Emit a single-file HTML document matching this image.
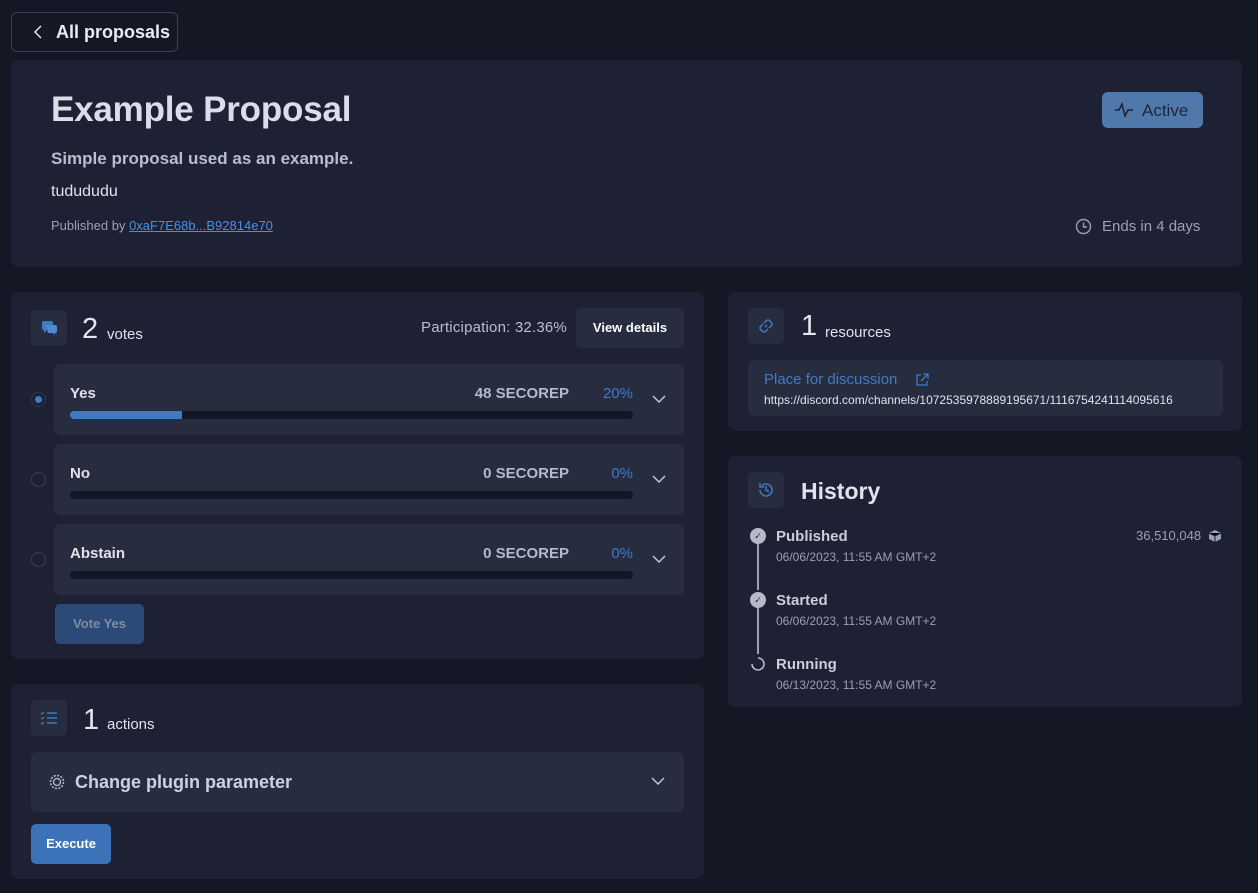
<!DOCTYPE html>
<html><head><meta charset="utf-8"><style>
*{box-sizing:border-box;margin:0;padding:0}
body{width:1258px;height:893px;background:#141824;font-family:"Liberation Sans",sans-serif;color:#e2e6ef;position:relative;overflow:hidden}
.a{position:absolute}
.card{position:absolute;background:#1d2133;border-radius:8px}
.ib{position:absolute;width:36px;height:36px;background:#272c3e;border-radius:5px;display:flex;align-items:center;justify-content:center}
.row{position:absolute;left:54px;width:630px;height:71px;background:#272c3e;border-radius:6px}
.row .l{position:absolute;left:16px;top:21px;font-size:15px;font-weight:bold;color:#dfe3ec}
.row .s{position:absolute;right:115px;top:21px;font-size:15px;font-weight:bold;color:#b4bac8}
.row .p{position:absolute;right:51px;top:21px;font-size:15px;color:#3f7ac4}
.row .bar{position:absolute;left:16px;top:47px;width:563px;height:8px;border-radius:4px;background:#121625;overflow:hidden}
.row .ch{position:absolute;right:18px;top:31px}
.rad{position:absolute;left:31px;width:15px;height:15px;border-radius:50%;border:1px solid #3a4050;background:#1d2133}
.sub{font-size:12px;color:#9aa1b1}
</style></head><body>
<div class="a" style="left:11px;top:12px;width:167px;height:40px;border:1px solid #3a3f55;border-radius:6px"></div>
<svg class="a" style="left:32px;top:24px" width="12" height="16"><path d="M9 2 L3 8 L9 14" stroke="#dfe3ec" stroke-width="1.5" fill="none"/></svg>
<div class="a" style="left:56px;top:22px;font-size:18px;font-weight:bold;color:#e8ebf2">All proposals</div>

<div class="card" style="left:11px;top:60px;width:1231px;height:207px"></div>
<div class="a" style="left:51px;top:90px;font-size:35px;font-weight:bold;color:#d9dfea;letter-spacing:-0.2px">Example Proposal</div>
<div class="a" style="left:51px;top:149px;font-size:17px;font-weight:bold;color:#b8bfcc">Simple proposal used as an example.</div>
<div class="a" style="left:51px;top:183px;font-size:16px;color:#dfe3ec">tudududu</div>
<div class="a" style="left:51px;top:218px;font-size:13px;color:#9aa1b1">Published by <span style="color:#4a8ee6;text-decoration:underline">0xaF7E68b...B92814e70</span></div>
<div class="a" style="left:1102px;top:92px;width:101px;height:36px;background:#4f79ab;border-radius:6px"></div>
<svg class="a" style="left:1114px;top:101px" width="20" height="18"><path d="M1 9 H5 L8 3 L11 15 L14 9 H19" stroke="#1d2133" stroke-width="1.5" fill="none"/></svg>
<div class="a" style="left:1142px;top:101px;font-size:17px;color:#1e2538">Active</div>
<svg class="a" style="left:1075px;top:218px" width="17" height="17"><circle cx="8.5" cy="8.5" r="7" stroke="#9aa1b1" stroke-width="1.4" fill="none"/><path d="M8.5 4.5V9H12" stroke="#9aa1b1" stroke-width="1.4" fill="none"/></svg>
<div class="a" style="left:1102px;top:218px;font-size:15px;color:#9aa1b1">Ends in 4 days</div>

<div class="card" style="left:11px;top:292px;width:693px;height:367px"></div>
<div class="ib" style="left:31px;top:310px"><svg width="18" height="16"><path d="M2 3 Q2 1 4 1 H11 Q13 1 13 3 V8 Q13 10 11 10 H7 L4 13 V10 Q2 10 2 8Z" fill="#3f7ac4"/><path d="M6 5 H15 Q17 5 17 7 V11 Q17 13 15 13 V15 L13 13 H8" fill="#4f8ad4"/></svg></div>
<div class="a" style="left:82px;top:313px;font-size:29px;color:#e2e6ef">2</div>
<div class="a" style="left:107px;top:326px;font-size:15px;color:#dfe3ec">votes</div>
<div class="a" style="left:421px;top:319px;font-size:15px;color:#b8bfcc;letter-spacing:0.2px">Participation: 32.36%</div>
<div class="a" style="left:576px;top:308px;width:108px;height:40px;background:#272c3e;border-radius:5px;font-size:13px;font-weight:bold;color:#fff;text-align:center;line-height:40px">View details</div>

<div class="rad" style="top:392px;border-color:#2a3556"><div style="position:absolute;left:3px;top:3px;width:7px;height:7px;border-radius:50%;background:#3f7ac4"></div></div>
<div class="row" style="top:364px"><div class="l">Yes</div><div class="s">48 SECOREP</div><div class="p">20%</div><div class="bar"><div style="width:112px;height:8px;background:#3f7ac4"></div></div><svg class="ch" width="14" height="9"><path d="M1 1 L7 7 L13 1" stroke="#c8cdd8" stroke-width="1.4" fill="none"/></svg></div>
<div class="rad" style="top:472px"></div>
<div class="row" style="top:444px"><div class="l">No</div><div class="s">0 SECOREP</div><div class="p">0%</div><div class="bar"></div><svg class="ch" width="14" height="9"><path d="M1 1 L7 7 L13 1" stroke="#c8cdd8" stroke-width="1.4" fill="none"/></svg></div>
<div class="rad" style="top:552px"></div>
<div class="row" style="top:524px"><div class="l">Abstain</div><div class="s">0 SECOREP</div><div class="p">0%</div><div class="bar"></div><svg class="ch" width="14" height="9"><path d="M1 1 L7 7 L13 1" stroke="#c8cdd8" stroke-width="1.4" fill="none"/></svg></div>
<div class="a" style="left:55px;top:604px;width:89px;height:40px;background:#2c4a78;border-radius:5px;font-size:13px;font-weight:bold;color:#7f8da3;text-align:center;line-height:40px">Vote Yes</div>

<div class="card" style="left:11px;top:684px;width:693px;height:195px"></div>
<div class="ib" style="left:31px;top:700px"><svg width="18" height="14"><path d="M7 2H17M7 7H17M7 12H17" stroke="#3f7ac4" stroke-width="1.6"/><path d="M1 2L2 3L4 1M1 7L2 8L4 6M1 12L2 13L4 11" stroke="#3f7ac4" stroke-width="1.2" fill="none"/></svg></div>
<div class="a" style="left:83px;top:704px;font-size:29px;color:#e2e6ef">1</div>
<div class="a" style="left:107px;top:716px;font-size:15px;color:#dfe3ec">actions</div>
<div class="a" style="left:31px;top:752px;width:653px;height:60px;background:#272c3e;border-radius:6px"></div>
<svg class="a" style="left:49px;top:774px" width="16" height="16"><circle cx="8" cy="8" r="6.5" stroke="#b8bfcc" stroke-width="1.5" stroke-dasharray="2 1.4" fill="none"/><circle cx="8" cy="8" r="3.5" stroke="#b8bfcc" stroke-width="1.3" fill="none"/></svg>
<div class="a" style="left:75px;top:772px;font-size:18px;font-weight:bold;color:#c9d3e3">Change plugin parameter</div>
<svg class="a" style="left:651px;top:777px" width="14" height="9"><path d="M1 1 L7 7 L13 1" stroke="#c8cdd8" stroke-width="1.4" fill="none"/></svg>
<div class="a" style="left:31px;top:824px;width:80px;height:40px;background:#3c73b8;border-radius:5px;font-size:13px;font-weight:bold;color:#fff;text-align:center;line-height:40px">Execute</div>

<div class="card" style="left:728px;top:292px;width:514px;height:139px"></div>
<div class="ib" style="left:748px;top:308px"><svg width="18" height="18"><path d="M8 10 L10 8 M7 6 L9 4 Q11 2 13 4 L14 5 Q16 7 14 9 L12 11 M11 12 L9 14 Q7 16 5 14 L4 13 Q2 11 4 9 L6 7" stroke="#3f7ac4" stroke-width="1.5" fill="none"/></svg></div>
<div class="a" style="left:801px;top:310px;font-size:29px;color:#e2e6ef">1</div>
<div class="a" style="left:825px;top:324px;font-size:15px;color:#dfe3ec">resources</div>
<div class="a" style="left:748px;top:360px;width:475px;height:56px;background:#272c3e;border-radius:6px"></div>
<div class="a" style="left:764px;top:371px;font-size:15px;color:#3f7ac4">Place for discussion</div>
<svg class="a" style="left:915px;top:373px" width="14" height="14"><path d="M6 2H2V12H12V8M8 1H13V6M13 1L6 8" stroke="#3f7ac4" stroke-width="1.3" fill="none"/></svg>
<div class="a" style="left:764px;top:393px;font-size:12px;color:#dfe3ec">https://discord.com/channels/1072535978889195671/1116754241114095616</div>

<div class="card" style="left:728px;top:456px;width:514px;height:251px"></div>
<div class="ib" style="left:748px;top:472px"><svg width="18" height="18"><path d="M3 9 A6 6 0 1 0 5 4.5" stroke="#3f7ac4" stroke-width="1.5" fill="none"/><path d="M3 2V6H7" stroke="#3f7ac4" stroke-width="1.5" fill="none"/><path d="M9 5V9L12 11" stroke="#3f7ac4" stroke-width="1.5" fill="none"/></svg></div>
<div class="a" style="left:801px;top:478px;font-size:23px;font-weight:bold;color:#dfe3ec">History</div>
<div class="a" style="left:757px;top:544px;width:2px;height:46px;background:#9aa1b1"></div>
<div class="a" style="left:757px;top:608px;width:2px;height:46px;background:#9aa1b1"></div>
<div class="a" style="left:750px;top:528px;width:16px;height:16px;border-radius:50%;background:#b4bac8;text-align:center;font-size:9px;line-height:16px;color:#1d2133">✓</div>
<div class="a" style="left:750px;top:592px;width:16px;height:16px;border-radius:50%;background:#b4bac8;text-align:center;font-size:9px;line-height:16px;color:#1d2133">✓</div>
<svg class="a" style="left:750px;top:656px" width="16" height="16"><path d="M8 2 A6 6 0 1 1 2 8" stroke="#b4bac8" stroke-width="1.6" fill="none"/></svg>
<div class="a" style="left:776px;top:528px;font-size:15px;font-weight:bold;color:#c9ced9">Published</div>
<div class="a sub" style="left:776px;top:550px">06/06/2023, 11:55 AM GMT+2</div>
<div class="a" style="left:776px;top:592px;font-size:15px;font-weight:bold;color:#c9ced9">Started</div>
<div class="a sub" style="left:776px;top:614px">06/06/2023, 11:55 AM GMT+2</div>
<div class="a" style="left:776px;top:656px;font-size:15px;font-weight:bold;color:#c9ced9">Running</div>
<div class="a sub" style="left:776px;top:678px">06/13/2023, 11:55 AM GMT+2</div>
<div class="a" style="left:1136px;top:528px;font-size:13px;color:#9aa1b1">36,510,048</div>
<svg class="a" style="left:1208px;top:529px" width="14" height="14"><path d="M7 1L13 4V10L7 13L1 10V4Z" fill="#9aa1b1"/><path d="M1 4L7 7L13 4M7 7V13" stroke="#1d2133" stroke-width="1"/></svg>
</body></html>
